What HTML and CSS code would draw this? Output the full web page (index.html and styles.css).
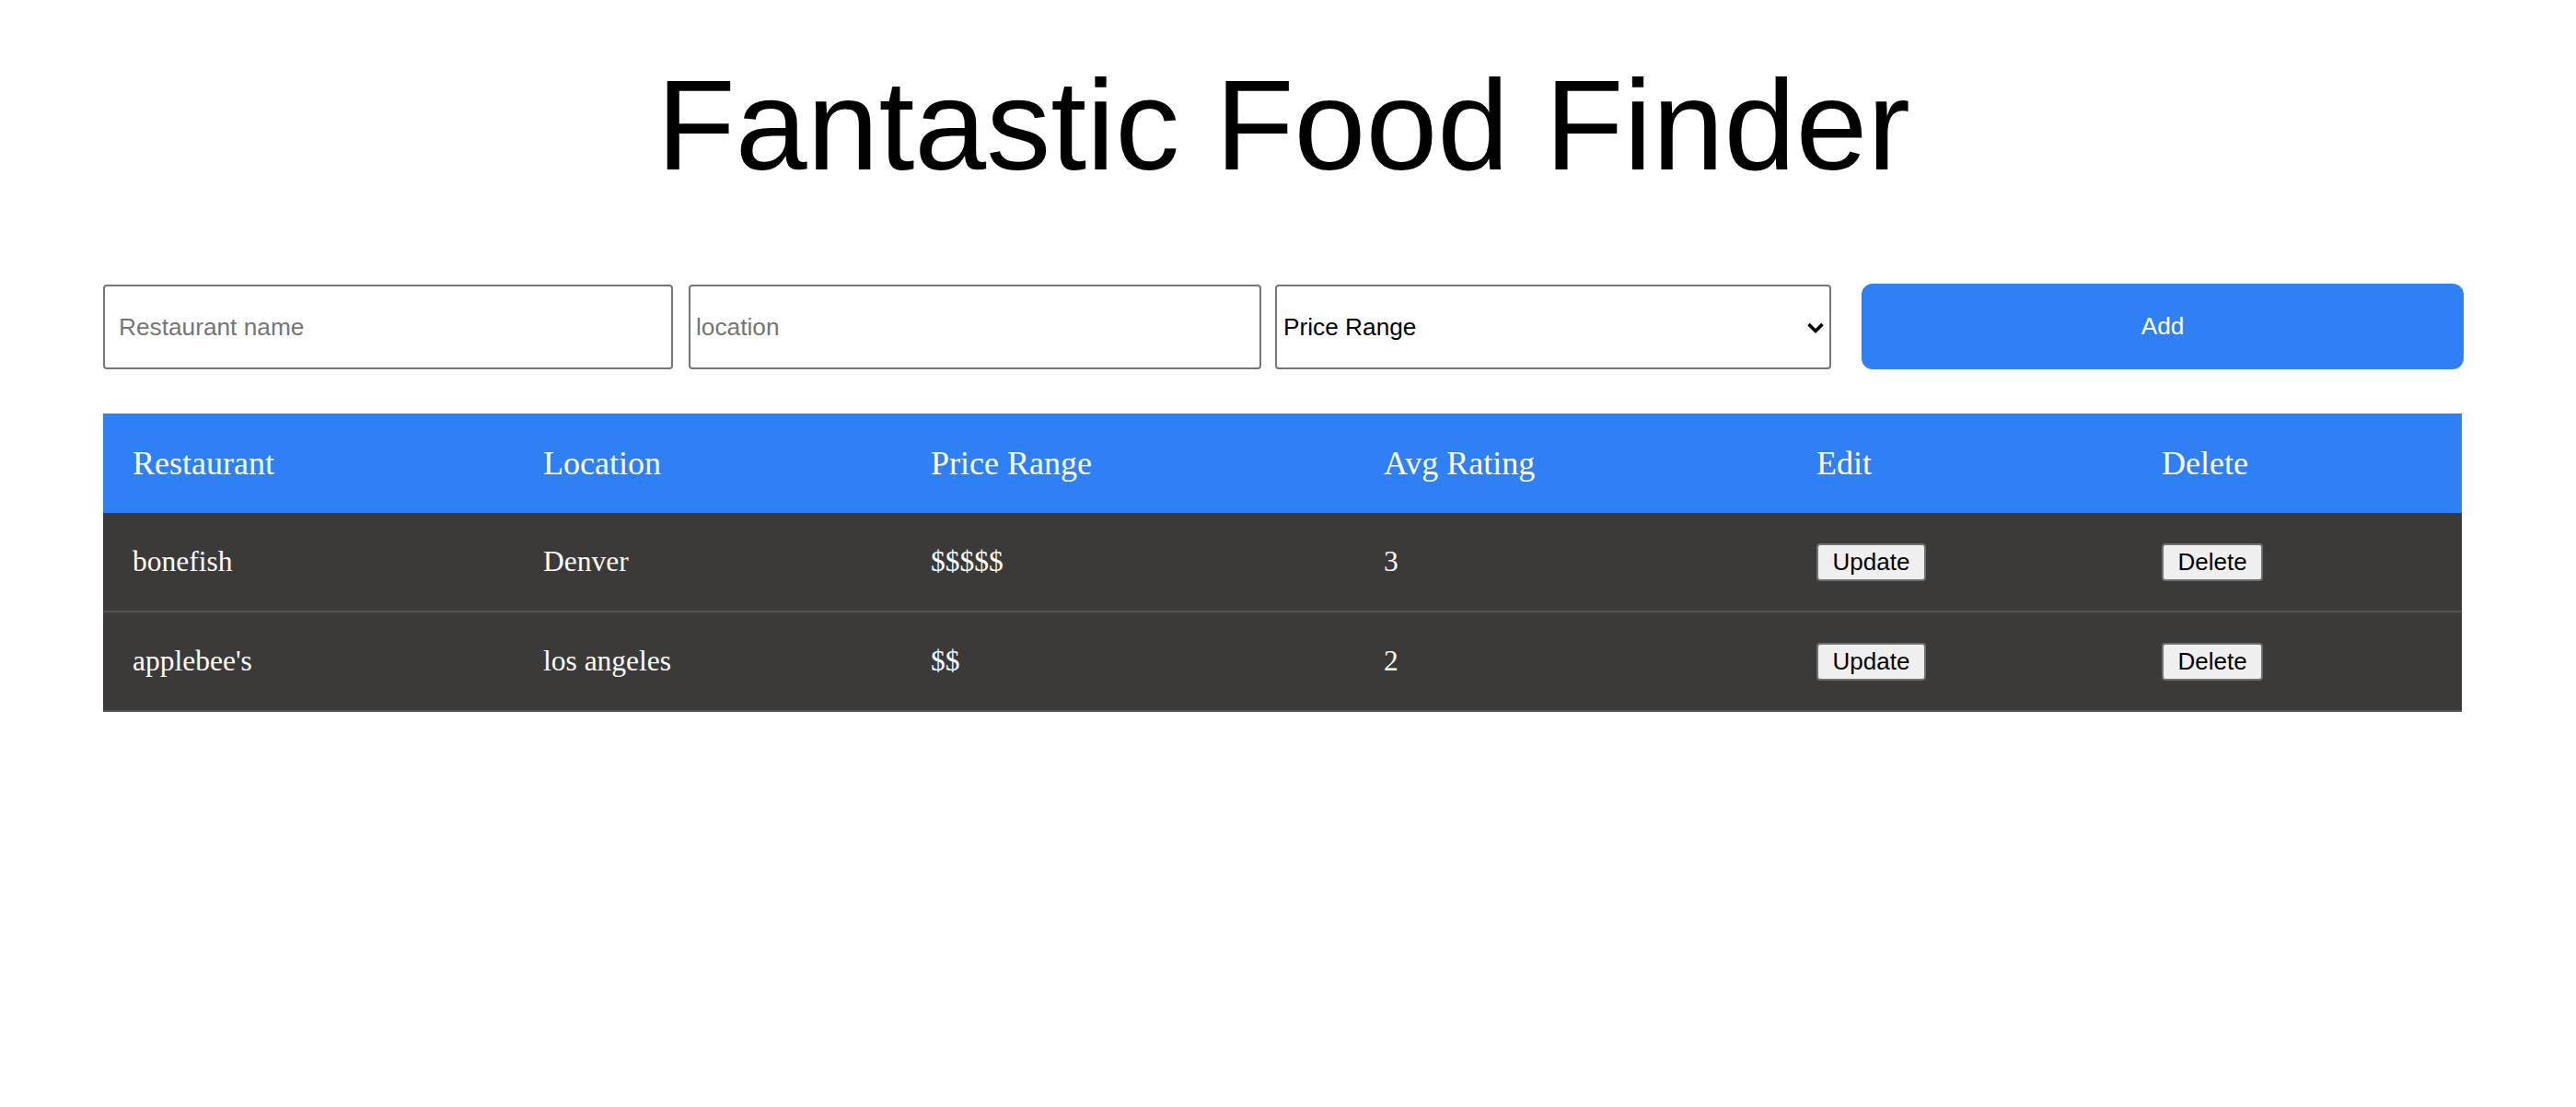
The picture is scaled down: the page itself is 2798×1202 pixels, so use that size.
FILE: index.html
```html
<!DOCTYPE html>
<html lang="en">
<head>
<meta charset="utf-8">
<title>Fantastic Food Finder</title>
<link rel="stylesheet" href="styles.css">
</head>
<body>
<div class="container">
  <h1 class="title">Fantastic Food Finder</h1>
  <form class="add-form">
    <input class="field field-name" type="text" placeholder="Restaurant name">
    <input class="field field-location" type="text" placeholder="location">
    <div class="select-wrap">
      <select class="field field-price">
        <option>Price Range</option>
        <option>$</option>
        <option>$$</option>
        <option>$$$</option>
        <option>$$$$</option>
        <option>$$$$$</option>
      </select>
      <svg class="chevron" width="20" height="14" viewBox="0 0 20 14"><path d="M2.5 3 L10 10.5 L17.5 3" fill="none" stroke="#000" stroke-width="3.6"/></svg>
    </div>
    <button class="add-btn" type="button">Add</button>
  </form>
  <table class="list">
    <thead>
      <tr>
        <th>Restaurant</th>
        <th>Location</th>
        <th>Price Range</th>
        <th>Avg Rating</th>
        <th>Edit</th>
        <th>Delete</th>
      </tr>
    </thead>
    <tbody>
      <tr>
        <td>bonefish</td>
        <td>Denver</td>
        <td>$$$$$</td>
        <td>3</td>
        <td><button class="row-btn" type="button">Update</button></td>
        <td><button class="row-btn" type="button">Delete</button></td>
      </tr>
      <tr>
        <td>applebee's</td>
        <td>los angeles</td>
        <td>$$</td>
        <td>2</td>
        <td><button class="row-btn" type="button">Update</button></td>
        <td><button class="row-btn" type="button">Delete</button></td>
      </tr>
    </tbody>
  </table>
</div>
</body>
</html>
```
FILE: styles.css
```css
html, body {
  margin: 0;
  padding: 0;
  background: #ffffff;
}

.container {
  margin-left: 112px;
  width: 2564px;
}

.title {
  margin: 0;
  padding-top: 55px;
  font-family: "Liberation Sans", Arial, sans-serif;
  font-weight: 400;
  font-size: 140px;
  line-height: normal;
  text-align: center;
  color: #000;
}

.add-form {
  display: flex;
  align-items: stretch;
  margin-top: 92px;
  height: 92px;
}

.field {
  box-sizing: border-box;
  height: 92px;
  margin: 0;
  border: 2px solid #767676;
  border-radius: 4px;
  background: #fff;
  font-family: "Liberation Sans", Arial, sans-serif;
  font-size: 26.25px;
  color: #000;
  outline: none;
}

.field::placeholder {
  color: #757575;
}

.field-name {
  width: 619px;
  padding: 0 15px;
  margin-right: 17px;
}

.field-location {
  width: 622px;
  padding: 0 6px;
  margin-right: 15px;
}

.select-wrap {
  position: relative;
  width: 604px;
  margin-right: 33px;
}

.field-price {
  width: 100%;
  padding: 0 40px 0 7px;
  appearance: none;
  -webkit-appearance: none;
}

.chevron {
  position: absolute;
  right: 7px;
  top: 40px;
  pointer-events: none;
}

.add-btn {
  box-sizing: border-box;
  width: 654px;
  height: 93px;
  margin-top: -1px;
  border: none;
  border-radius: 12px;
  background: #2f80f5;
  color: #fff;
  font-family: "Liberation Sans", Arial, sans-serif;
  font-size: 26.25px;
}

.list {
  margin-top: 48px;
  width: 2562px;
  border-collapse: collapse;
  table-layout: fixed;
  font-family: "Liberation Serif", "Times New Roman", serif;
  color: #fff;
}

.list th:nth-child(1) { width: 446px; }
.list th:nth-child(2) { width: 421px; }
.list th:nth-child(3) { width: 492px; }
.list th:nth-child(4) { width: 470px; }
.list th:nth-child(5) { width: 375px; }
.list th:nth-child(6) { width: 358px; }

.list thead tr {
  background: #2f80f5;
}

.list th {
  box-sizing: border-box;
  height: 108px;
  padding: 0 0 0 32px;
  text-align: left;
  font-weight: 400;
  font-size: 36px;
  vertical-align: middle;
}

.list tbody tr {
  background: #3c3a38;
  border-bottom: 2px solid #555353;
}

.list td {
  height: 106px;
  padding: 0 0 0 32px;
  font-size: 31.5px;
  vertical-align: middle;
}

.row-btn {
  box-sizing: border-box;
  height: 41px;
  padding: 0 15.5px;
  border: 2px solid #6f6f6f;
  border-radius: 4px;
  background: #efefef;
  color: #000;
  font-family: "Liberation Sans", Arial, sans-serif;
  font-size: 26px;
  line-height: 1;
  vertical-align: middle;
}
```
